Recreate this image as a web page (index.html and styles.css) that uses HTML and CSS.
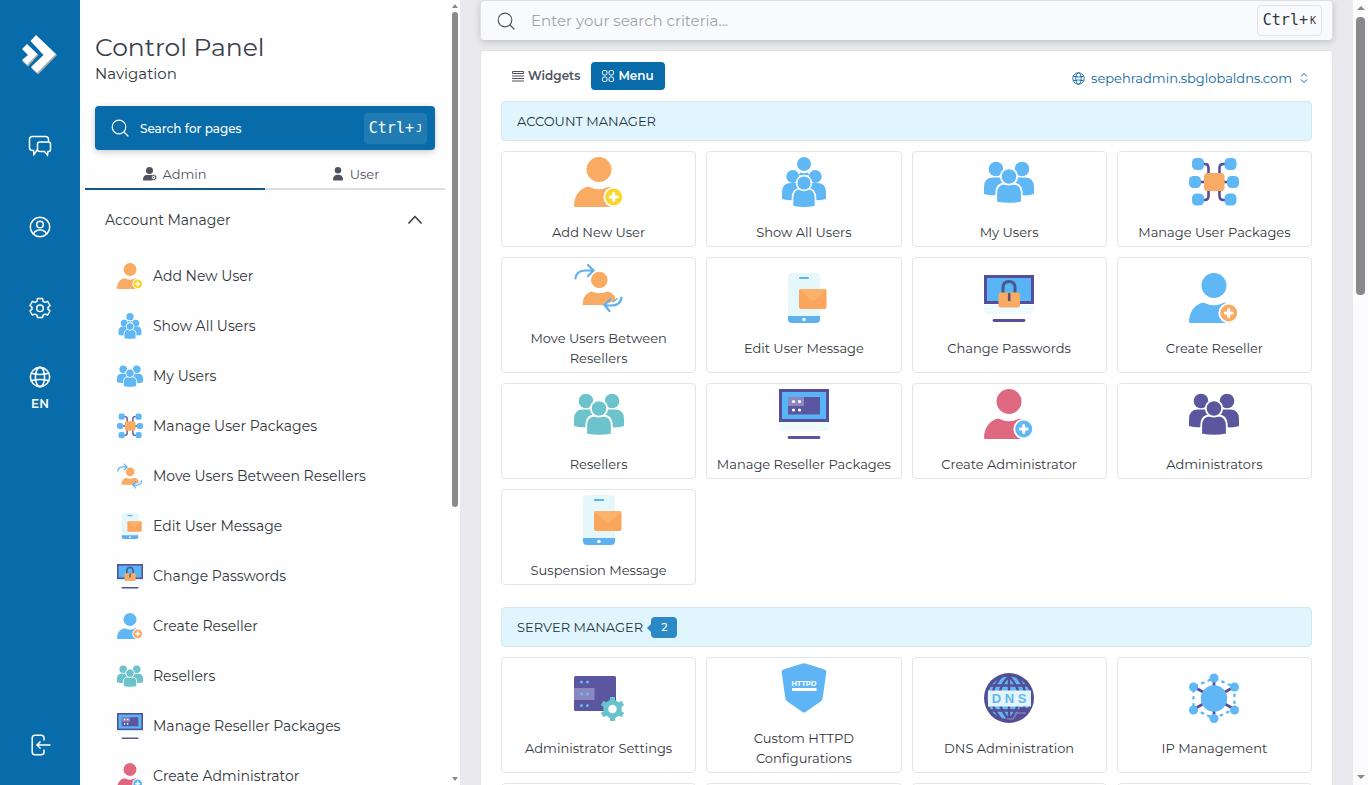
FILE: index.html
```html
<!DOCTYPE html>
<html lang="en">
<head>
    <meta charset="UTF-8">
    <meta name="viewport" content="width=device-width, initial-scale=1.0">
    <title>Control Panel</title>
    <link rel="stylesheet" href="styles.css">
</head>
<body>
    <!-- Shared icons -->
    <svg class="sprite" aria-hidden="true">
        <symbol id="user-plus" viewBox="0 0 50 50">
            <circle cx="25" cy="12.5" r="12.5" fill="currentColor"/>
            <path d="M1.5 50Q0 50 0 48.5C.5 38 6 31 14.5 29.5Q25 35 35.5 29.5L41 32V50Z" fill="currentColor"/>
            <circle cx="39.7" cy="40" r="10.3" fill="#fff"/>
            <circle class="plus" cx="39.7" cy="40" r="8.5"/>
            <path d="M39.7 36.500v7M36.200 40h7" stroke="#fff" stroke-width="3" stroke-linecap="round"/>
        </symbol>
        <symbol id="all-users" viewBox="0 0 50 50">
            <g fill="currentColor">
                <circle cx="25" cy="7" r="7"/>
                <path d="M21 15.5q4 1.500 8 0l1 3H20z"/>
                <circle cx="13.8" cy="19.5" r="6.5"/>
                <circle cx="36.2" cy="19.5" r="6.5"/>
                <path d="M3 42V35q0-9 9-9h26q9 0 9 9v7q-5 1.500-10 1H13q-5 .5-10-1z"/>
            </g>
            <g fill="currentColor" stroke="#fff" stroke-width="1.6">
                <path d="M13.500 49.500V41q0-9.500 8.500-9.500h6q8.500 0 8.500 9.500v8.500q-11.500 2.500-23 0z"/>
                <circle cx="25" cy="26" r="7.4"/>
            </g>
        </symbol>
        <symbol id="group" viewBox="0 0 50 50">
            <g fill="currentColor">
                <circle cx="12" cy="12" r="7.3"/>
                <circle cx="38" cy="12" r="7.3"/>
                <path d="M0 37V30q0-9.500 9-9.500h32q9 0 9 9.500v7q-5 1.800-11 1.300H11Q5 38.500 0 37z"/>
            </g>
            <path d="M16 20.500q2-3 1-6h16q-1 3 1 6z" fill="#fff"/>
            <g fill="currentColor" stroke="#fff" stroke-width="1.8">
                <path d="M12.200 45.500V37q0-10.500 9-10.500h7.600q9 0 9 10.500v8.500q-12.800 2.500-25.600 0z"/>
                <circle cx="25" cy="19.5" r="8.2"/>
            </g>
        </symbol>
        <symbol id="packages" viewBox="0 0 50 50">
            <path d="M14 7h1.500q4 0 4 4v28q0 4-4 4H14M36 7h-1.500q-4 0-4 4v28q0 4 4 4H36M10 25h30" fill="none" stroke="#564f97" stroke-width="2.6"/>
            <g fill="#5fb7f6">
                <rect x="3" y="1" width="12" height="12" rx="4.5"/>
                <rect x="0" y="19" width="12" height="12" rx="4.5"/>
                <rect x="3" y="36.5" width="12" height="12" rx="4.5"/>
                <rect x="35.5" y="1" width="12" height="12" rx="4.5"/>
                <rect x="38" y="19" width="12" height="12" rx="4.5"/>
                <rect x="35.5" y="36.5" width="12" height="12" rx="4.5"/>
            </g>
            <rect x="15" y="16" width="20.5" height="18" rx="3.5" fill="#f9aa63"/>
        </symbol>
        <symbol id="move-users" viewBox="0 0 50 50">
            <g fill="#f9aa63">
                <circle cx="25.3" cy="17" r="8.3"/>
                <path d="M8.500 42q0-10 8.500-13.500 8 3.500 16.500 0Q41 30 41.500 37L31 42z"/>
            </g>
            <path d="M49 35q-2 8-16 8" fill="none" stroke="#fff" stroke-width="5"/>
            <g fill="none" stroke="#5fb0ee" stroke-width="2.2" stroke-linecap="round">
                <path d="M1.500 15.500Q2 8 11 7.500h8M14 2l5.500 5.500L14 13"/>
                <path d="M47.500 34.500q-1 8-10 8h-7M36 36.500l-5.500 5.500 5 6"/>
                <path d="M39 38.500q3-1 4-3" stroke-width="1.4"/>
            </g>
        </symbol>
        <symbol id="message" viewBox="0 0 50 50">
            <rect x="9" y="0" width="32" height="50" rx="4" fill="#e6f7fb"/>
            <path d="M9 43h32v3q0 4-4 4H13q-4 0-4-4z" fill="#5fb0ee"/>
            <circle cx="25" cy="46.5" r="1.7" fill="#fff"/>
            <path d="M21 5h8" stroke="#5fb0ee" stroke-width="2.2" stroke-linecap="round"/>
            <rect x="20" y="16" width="27.5" height="20" rx="2" fill="#f9a65c"/>
            <path d="M20.500 17L34 28.500 47 17q-.5-1-2-1H22q-1 0-1.500 1z" fill="#fbb26d"/>
        </symbol>
        <symbol id="password" viewBox="0 0 50 50">
            <path d="M0 32h50v4q0 5-5 5H5q-5 0-5-5z" fill="#effafd"/>
            <rect x="1.5" y="3.5" width="47" height="26" fill="#58b4f4" stroke="#564f97" stroke-width="3"/>
            <path d="M10 47.500h30" stroke="#564f97" stroke-width="2.8" stroke-linecap="round"/>
            <path d="M19 21v-6q0-6.500 6-6.500t6 6.500v6" fill="none" stroke="#48598d" stroke-width="3"/>
            <rect x="14.5" y="19.5" width="21.5" height="15" rx="2" fill="#f9aa63"/>
            <path d="M25.200 21v6" stroke="#5a5173" stroke-width="2.6" stroke-linecap="round"/>
        </symbol>
        <symbol id="reseller-packages" viewBox="0 0 50 50">
            <path d="M0 33h50v5q0 4-5 4H5q-5 0-5-4z" fill="#effafd"/>
            <rect x="1.5" y="1.5" width="47" height="30" fill="#58b4f4" stroke="#564f97" stroke-width="3"/>
            <rect x="9" y="8" width="32" height="17.5" fill="#5a569f"/>
            <rect x="9" y="8" width="16" height="9" fill="#8b88c0"/>
            <g fill="#fff">
                <circle cx="14.5" cy="12.5" r="1.6"/>
                <circle cx="20.5" cy="12.5" r="1.6"/>
                <circle cx="14.5" cy="21" r="1.6"/>
                <circle cx="20.5" cy="21" r="1.6"/>
            </g>
            <path d="M10 48.500h30" stroke="#5a569f" stroke-width="2.8" stroke-linecap="round"/>
        </symbol>
        <symbol id="server" viewBox="0 0 50 50">
            <rect x="0" y="3" width="42" height="35" rx="1.5" fill="#5a569f"/>
            <rect x="0" y="15" width="20.5" height="12" fill="#8b88c0"/>
            <g fill="#62c0ec">
                <circle cx="7.5" cy="9" r="1.5"/>
                <circle cx="13.5" cy="9" r="1.5"/>
                <circle cx="7.5" cy="21" r="1.5"/>
                <circle cx="13.5" cy="21" r="1.5"/>
                <circle cx="7.5" cy="32.5" r="1.5"/>
                <circle cx="13.5" cy="32.5" r="1.5"/>
            </g>
            <g stroke="#68c3cb" stroke-width="5">
                <path d="M38.500 24v24M28.100 30l20.800 12M28.100 42l20.800-12"/>
                <circle cx="38.5" cy="36" r="6.8" fill="#fff"/>
            </g>
        </symbol>
        <symbol id="httpd" viewBox="0 0 50 50">
            <path d="M23.500.5q1.500-.7 3 0L45.500 6.500q2 .8 1.900 2.500L43.500 36q-.3 1.500-1.500 2.300L26.500 49q-1.500 1-3 0L8 38.300Q6.800 37.500 6.500 36L2.600 9q-.1-1.700 1.900-2.500z" fill="#5fb4f6"/>
            <text x="25" y="22.5" class="httpd-text">HTTPD</text>
            <path d="M13 26.500h24.500" stroke="#fff" stroke-width="3"/>
        </symbol>
        <symbol id="dns" viewBox="0 0 50 50">
            <circle cx="25" cy="25" r="25" fill="#544e96"/>
            <circle cx="25" cy="25" r="21.5" fill="#62b8f2"/>
            <path d="M25 3v44M25 3Q5 24 25 47M25 3q20 21 0 44M17 4Q-1 25 17 46M33 4q18 21 0 42M7 12.500h36M7 37.500h36" fill="none" stroke="#544e96" stroke-width="2.4"/>
            <path d="M36 34q-3 11-18 12 18 6 27-11z" fill="#544e96"/>
            <path d="M23 46h6l4-6h9" fill="none" stroke="#837bb4" stroke-width="1.6"/>
            <rect x="4" y="17.5" width="43" height="16" fill="#e3f4fb"/>
            <text x="25" y="30" class="dns-text">D N S</text>
        </symbol>
        <symbol id="network" viewBox="0 0 50 50">
            <path d="M25 5v40M5 14l40 22M5 36l40-22" stroke="#564f97" stroke-width="2.8"/>
            <path d="M25 5l20.500 9v22L25 45.500 4.500 36V14z" fill="none" stroke="#5fb7f6" stroke-width="2.4" stroke-dasharray="1.5 5.500" stroke-dashoffset="-2" stroke-linecap="round"/>
            <g fill="#5fb7f6">
                <circle cx="25" cy="25.5" r="13.2"/>
                <circle cx="25" cy="5" r="4.5"/>
                <circle cx="45.5" cy="14" r="4.5"/>
                <circle cx="45.5" cy="37" r="4.5"/>
                <circle cx="25" cy="45.5" r="4.5"/>
                <circle cx="4.5" cy="37" r="4.5"/>
                <circle cx="4.5" cy="14" r="4.5"/>
            </g>
        </symbol>
        <symbol id="globe" viewBox="0 0 24 24">
            <g fill="none" stroke="currentColor" stroke-width="1.7">
                <circle cx="12" cy="12" r="10.5"/>
                <ellipse cx="12" cy="12" rx="5" ry="10.5"/>
                <path d="M2.500 8q9.500 2.500 19 0M2.500 16q9.500-2.500 19 0"/>
            </g>
        </symbol>
        <symbol id="search" viewBox="0 0 18 18">
            <g fill="none" stroke="currentColor" stroke-width="1.2" stroke-linecap="round">
                <circle cx="8" cy="8" r="6.8"/>
                <path d="M13 13l4 4"/>
            </g>
        </symbol>
    </svg>

    <div class="layout">
        <!-- Icon rail -->
        <nav class="rail" aria-label="Tools">
            <a class="logo" href="#" aria-label="Home">
                <svg width="36" height="40" viewBox="0 0 36 40">
                    <path d="M34 19L15 38 9 32 10 34 16 39.500 35 20zM15.500 19L5 30 0 25 1 27 6 31.500 16.500 20z" fill="#b5b1aa"/>
                    <path d="M14 0L34 19 15 38 9 32 21.500 20 8.500 6zM5 9L15.500 19 5 30 0 25 6 20 0 14z" fill="#fff"/>
                </svg>
            </a>
            <button class="rail-btn" aria-label="Messages">
                <svg width="24" height="22" viewBox="0 0 24 22">
                    <path d="M9.500 14.500L6 19.500 5.500 15.500H4.500Q1.500 15.500 1.500 12.500V4.500Q1.500 1.500 4.500 1.500H17.500Q20.500 1.500 20.500 4.500V7"/>
                    <path d="M12 7H20Q22.500 7 22.500 9V14.500Q22.500 16.500 20.500 16.500H20L19.500 20 16.500 16.500H12Q9.500 16.500 9.500 14.500V9Q9.500 7 12 7z"/>
                </svg>
            </button>
            <button class="rail-btn" aria-label="Profile">
                <svg width="22" height="22" viewBox="0 0 22 22">
                    <circle cx="11" cy="11" r="9.7"/>
                    <circle cx="11" cy="8.5" r="3.3"/>
                    <path d="M4.500 18Q6 14 11 14t6.500 4"/>
                </svg>
            </button>
            <button class="rail-btn" aria-label="Settings">
                <svg width="22" height="22" viewBox="0 0 22 22">
                    <path d="M8.500 1.500h5l.6 2.800 1.900 1.100 2.700-.9 2.300 4-2 1.900v1.700l2 1.900-2.300 4-2.700-.9-1.900 1.100-.6 2.300h-5l-.6-2.300L6 17.100l-2.700.9-2.300-4 2-1.900v-1.700L1 8.500l2.300-4 2.700.9 1.900-1.100z" stroke-linejoin="round"/>
                    <circle cx="11" cy="11.2" r="3.3"/>
                </svg>
            </button>
            <button class="rail-lang" aria-label="Language: EN">
                <svg width="22" height="22"><use href="#globe"/></svg>
                <span>EN</span>
            </button>
            <button class="rail-btn rail-exit" aria-label="Log out">
                <svg width="22" height="22" viewBox="0 0 22 22">
                    <path d="M15 6.500V4Q15 1.200 12 1.200H6Q3.200 1.200 3.200 4V18Q3.200 20.800 6 20.800h6Q15 20.800 15 18V15.500M21.500 11H8.500M11.500 7.500L8 11l3.500 3.500"/>
                </svg>
            </button>
        </nav>

        <!-- Navigation panel -->
        <aside class="panel">
            <div class="panel-body">
                <div class="panel-head">
                    <h1>Control Panel</h1>
                    <p>Navigation</p>
                    <button class="page-search">
                        <svg width="18" height="18"><use href="#search"/></svg>
                        <span>Search for pages</span>
                        <kbd>Ctrl+<small>J</small></kbd>
                    </button>
                </div>
                <div class="tabs">
                    <button class="tab active">
                        <svg width="14" height="14" viewBox="0 0 14 14" fill="currentColor">
                            <circle cx="6.5" cy="3.5" r="3.5"/>
                            <path d="M0 13Q0 8 4 8h5v5.500H1q-1 0-1-.5z"/>
                            <circle cx="10.5" cy="10.5" r="2.2" fill="#fff" stroke="currentColor" stroke-width="1.5" stroke-dasharray="1.4 .4"/>
                            <circle cx="10.5" cy="10.5" r=".6"/>
                        </svg>
                        Admin
                    </button>
                    <button class="tab">
                        <svg width="14" height="14" viewBox="0 0 14 14" fill="currentColor">
                            <circle cx="7" cy="3.3" r="3.2"/>
                            <path d="M2 12.500Q2 7.800 7 7.800t5 4.700q0 1-1 1H3q-1 0-1-1z"/>
                        </svg>
                        User
                    </button>
                </div>
                <button class="group-toggle">
                    Account Manager
                    <svg width="16" height="10" viewBox="0 0 16 10"><path d="M1.500 8.500L8 1.500l6.500 7" fill="none" stroke="currentColor" stroke-width="1.5"/></svg>
                </button>
                <ul class="nav-list">
                    <li><a href="#"><svg class="orange"><use href="#user-plus"/></svg>Add New User</a></li>
                    <li><a href="#"><svg class="blue"><use href="#all-users"/></svg>Show All Users</a></li>
                    <li><a href="#"><svg class="blue"><use href="#group"/></svg>My Users</a></li>
                    <li><a href="#"><svg><use href="#packages"/></svg>Manage User Packages</a></li>
                    <li><a href="#"><svg><use href="#move-users"/></svg>Move Users Between Resellers</a></li>
                    <li><a href="#"><svg><use href="#message"/></svg>Edit User Message</a></li>
                    <li><a href="#"><svg><use href="#password"/></svg>Change Passwords</a></li>
                    <li><a href="#"><svg class="blue"><use href="#user-plus"/></svg>Create Reseller</a></li>
                    <li><a href="#"><svg class="teal"><use href="#group"/></svg>Resellers</a></li>
                    <li><a href="#"><svg><use href="#reseller-packages"/></svg>Manage Reseller Packages</a></li>
                    <li><a href="#"><svg class="pink"><use href="#user-plus"/></svg>Create Administrator</a></li>
                </ul>
            </div>
            <div class="scrollbar" aria-hidden="true">
                <span class="arrow up"></span>
                <div class="track"><div class="thumb"></div></div>
                <span class="arrow down"></span>
            </div>
        </aside>

        <!-- Main content -->
        <main class="main">
            <div class="search-bar">
                <label for="criteria" aria-label="Search"><svg width="18" height="18"><use href="#search"/></svg></label>
                <input type="text" id="criteria" placeholder="Enter your search criteria...">
                <kbd>Ctrl+<small>K</small></kbd>
            </div>

            <div class="content">
                <div class="toolbar">
                    <div class="views">
                        <button class="view">
                            <svg width="12" height="12" viewBox="0 0 12 12" fill="none" stroke="currentColor"><path d="M.5 1.500h11v2H.5zM0 6h12M0 8.500h12M0 11h12"/></svg>
                            Widgets
                        </button>
                        <button class="view active">
                            <svg width="12" height="12" viewBox="0 0 12 12" fill="none" stroke="currentColor">
                                <rect x=".5" y=".5" width="4.5" height="4.5" rx="1.5"/>
                                <rect x="7" y=".5" width="4.5" height="4.5" rx="1.5"/>
                                <rect x=".5" y="7" width="4.5" height="4.5" rx="1.5"/>
                                <rect x="7" y="7" width="4.5" height="4.5" rx="1.5"/>
                            </svg>
                            Menu
                        </button>
                    </div>
                    <a class="domain" href="#">
                        <svg width="13" height="13"><use href="#globe"/></svg>
                        sepehradmin.sbglobaldns.com
                        <svg class="sort" width="8" height="10" viewBox="0 0 8 10" fill="none" stroke="currentColor"><path d="M1 3.500l3-3 3 3M1 6.500l3 3 3-3"/></svg>
                    </a>
                </div>

                <section>
                    <h2>Account Manager</h2>
                    <div class="cards">
                        <a class="card" href="#"><svg class="orange"><use href="#user-plus"/></svg>Add New User</a>
                        <a class="card" href="#"><svg class="blue"><use href="#all-users"/></svg>Show All Users</a>
                        <a class="card" href="#"><svg class="blue"><use href="#group"/></svg>My Users</a>
                        <a class="card" href="#"><svg><use href="#packages"/></svg>Manage User Packages</a>
                        <a class="card" href="#"><svg><use href="#move-users"/></svg>Move Users Between Resellers</a>
                        <a class="card" href="#"><svg><use href="#message"/></svg>Edit User Message</a>
                        <a class="card" href="#"><svg><use href="#password"/></svg>Change Passwords</a>
                        <a class="card" href="#"><svg class="blue"><use href="#user-plus"/></svg>Create Reseller</a>
                        <a class="card" href="#"><svg class="teal"><use href="#group"/></svg>Resellers</a>
                        <a class="card" href="#"><svg><use href="#reseller-packages"/></svg>Manage Reseller Packages</a>
                        <a class="card" href="#"><svg class="pink"><use href="#user-plus"/></svg>Create Administrator</a>
                        <a class="card" href="#"><svg class="purple"><use href="#group"/></svg>Administrators</a>
                        <a class="card" href="#"><svg><use href="#message"/></svg>Suspension Message</a>
                    </div>
                </section>

                <section>
                    <h2>Server Manager <span class="badge">2</span></h2>
                    <div class="cards">
                        <a class="card" href="#"><svg><use href="#server"/></svg>Administrator Settings</a>
                        <a class="card" href="#"><svg><use href="#httpd"/></svg>Custom HTTPD Configurations</a>
                        <a class="card" href="#"><svg><use href="#dns"/></svg>DNS Administration</a>
                        <a class="card" href="#"><svg><use href="#network"/></svg>IP Management</a>
                        <div class="card"></div>
                        <div class="card"></div>
                        <div class="card"></div>
                        <div class="card"></div>
                    </div>
                </section>
            </div>
        </main>
        <div class="scrollbar page-scroll" aria-hidden="true">
            <span class="arrow up"></span>
            <div class="track"><div class="thumb"></div></div>
            <span class="arrow down"></span>
        </div>
    </div>
</body>
</html>
```
FILE: styles.css
```css
* {
    box-sizing: border-box;
}
body {
    margin: 0;
    font-family: Montserrat, Inter, sans-serif;
    font-size: 13px;
    color: #33363d;
    background-color: #e9e9ed;
}
button {
    border: none;
    background: none;
    padding: 0;
    font: inherit;
    color: inherit;
    cursor: pointer;
}
a {
    color: inherit;
    text-decoration: none;
}
svg {
    flex-shrink: 0;
}
.sprite {
    display: none;
}
.layout {
    display: flex;
    height: 100vh;
    overflow: hidden;
}

/* icon rail */
.rail {
    width: 80px;
    flex-shrink: 0;
    display: flex;
    flex-direction: column;
    background-color: #086cab;
    color: white;
}
.logo {
    display: flex;
    align-items: center;
    justify-content: center;
    height: 105px;
    padding-top: 4px;
}
.rail-btn {
    display: flex;
    align-items: center;
    justify-content: center;
    height: 81px;
}
.rail-btn svg {
    fill: none;
    stroke: white;
    stroke-width: 1.5;
}
.rail-lang {
    display: flex;
    flex-direction: column;
    align-items: center;
    gap: 6px;
    padding-top: 18px;
    font-size: 12px;
    line-height: 20px;
    font-weight: 600;
}
.rail-exit {
    margin-top: auto;
}

/* navigation panel */
.panel {
    width: 380px;
    flex-shrink: 0;
    display: flex;
    background-color: #fefefe;
}
.panel-body {
    flex: 1;
    padding: 31px 5px 0;
    overflow: hidden;
}
.panel-head {
    padding: 0 10px;
}
.panel h1 {
    margin: 0;
    font-size: 25px;
    line-height: 32px;
    font-weight: 400;
    color: #3a3f4c;
}
.panel p {
    margin: 0 0 21px;
    font-size: 15px;
    line-height: 22px;
}
.page-search {
    display: flex;
    align-items: center;
    gap: 11px;
    width: 100%;
    height: 44px;
    padding: 0 8px 0 16px;
    border-radius: 4px;
    background-color: #086cab;
    color: white;
    font-size: 12px;
    font-weight: 500;
    box-shadow: 0 2px 6px rgba(0, 0, 0, 0.2);
}
kbd {
    margin-left: auto;
    padding: 0 5px;
    border-radius: 4px;
    font-family: "DejaVu Sans Mono", monospace;
    font-size: 15px;
    font-weight: 400;
    line-height: 30px;
    white-space: nowrap;
}
kbd small {
    font-size: 10px;
    margin-left: 2px;
    vertical-align: 1px;
}
.page-search kbd {
    background-color: rgba(255, 255, 255, 0.1);
}
.tabs {
    display: flex;
}
.tab {
    flex: 1;
    display: flex;
    align-items: center;
    justify-content: center;
    gap: 5px;
    padding-top: 10px;
    line-height: 28px;
    border-bottom: 2px solid #dcdde1;
    color: #50535e;
}
.tab.active {
    border-color: #11588a;
}
.group-toggle {
    display: flex;
    align-items: center;
    justify-content: space-between;
    width: 100%;
    height: 60px;
    padding: 0 22px 0 20px;
    font-size: 14px;
}
.nav-list {
    margin: 0;
    padding: 1px 0 0;
    list-style: none;
}
.nav-list a {
    display: flex;
    align-items: center;
    gap: 10px;
    height: 50px;
    padding-left: 32px;
    font-size: 14px;
}
.nav-list svg {
    width: 26px;
    height: 26px;
}

/* icon colours */
.orange {
    color: #f9aa63;
    --plus: #fad62c;
}
.blue {
    color: #5fb7f6;
    --plus: #f9aa63;
}
.teal {
    color: #6cc3cc;
}
.pink {
    color: #df6881;
    --plus: #5fb7f6;
}
.purple {
    color: #5b579f;
}
.plus {
    fill: var(--plus);
}
.httpd-text,
.dns-text {
    font-weight: 700;
    text-anchor: middle;
}
.httpd-text {
    font-size: 7px;
    fill: white;
}
.dns-text {
    font-family: "Liberation Sans", sans-serif;
    font-size: 13px;
    fill: #5fb7f6;
}

/* scrollbars */
.scrollbar {
    width: 10px;
    flex-shrink: 0;
    display: flex;
    flex-direction: column;
    align-items: center;
    padding: 4px 0;
}
.arrow {
    border: 3px solid transparent;
}
.arrow.up {
    border-top: none;
    border-bottom: 4px solid #8a8a8a;
}
.arrow.down {
    border-bottom: none;
    border-top: 4px solid #8a8a8a;
}
.track {
    flex: 1;
    width: 6px;
    margin: 4px 0;
}
.thumb {
    height: 65%;
    border-radius: 4px;
    background-color: #8a8a8a;
}
.page-scroll {
    width: 15px;
    padding: 6px 0;
    background-color: #fbfbfd;
}
.page-scroll .arrow {
    border-width: 4px;
}
.page-scroll .up {
    border-top: none;
}
.page-scroll .down {
    border-bottom: none;
}
.page-scroll .track {
    width: 9px;
    margin: 7px 0;
}
.page-scroll .thumb {
    height: 37%;
}

/* main content */
.main {
    flex: 1;
    min-width: 0;
    padding: 0 20px;
    overflow: hidden;
}
.search-bar {
    display: flex;
    align-items: center;
    height: 40px;
    padding: 0 10px 0 16px;
    border: 1px solid #dfe0e5;
    border-bottom: none;
    border-radius: 4px;
    background-color: #f9fafd;
    box-shadow: 0 2px 6px rgba(0, 0, 0, 0.16);
}
.search-bar label {
    display: flex;
    color: #55585f;
}
.search-bar input {
    flex: 1;
    min-width: 0;
    border: none;
    padding: 0 16px;
    background: none;
    font: inherit;
    font-size: 15px;
    outline: none;
}
.search-bar input::placeholder {
    color: #a2a4aa;
}
.search-bar kbd {
    border: 1px solid #e3e4e8;
    line-height: 28px;
}
.content {
    margin-top: 10px;
    padding: 11px 20px;
    border: 1px solid #e2e2e7;
    border-radius: 4px;
    background-color: white;
}
.toolbar {
    display: flex;
    justify-content: space-between;
    align-items: flex-end;
    margin-bottom: 11px;
}
.views {
    display: flex;
}
.view {
    display: flex;
    align-items: center;
    gap: 4px;
    padding: 0 11px;
    border-radius: 4px;
    font-size: 12px;
    line-height: 28px;
    font-weight: 600;
    color: #50535e;
}
.view.active {
    background-color: #086cab;
    color: white;
}
.domain {
    display: flex;
    align-items: center;
    gap: 6px;
    padding-right: 4px;
    line-height: 24px;
    color: #0b67a0;
}
.sort {
    margin-left: 2px;
}
.content h2 {
    display: flex;
    align-items: center;
    height: 40px;
    margin: 0 0 10px;
    padding: 0 15px;
    border: 1px solid #d5e6ee;
    border-radius: 4px;
    background-color: #e1f5fe;
    color: #1d3442;
    font-size: 13px;
    font-weight: 400;
    text-transform: uppercase;
}
.badge {
    position: relative;
    margin-left: 8px;
    padding: 0 10px;
    border-radius: 4px;
    background-color: #2b8ac5;
    color: white;
    font-size: 11px;
    font-weight: 500;
    line-height: 21px;
}
.badge::before {
    content: "";
    position: absolute;
    left: -4px;
    top: 7px;
    border: 4px solid transparent;
    border-left: none;
    border-right-color: #2b8ac5;
}
.cards {
    display: grid;
    grid-template-columns: repeat(4, 1fr);
    gap: 10px;
    margin-bottom: 22px;
}
.card {
    display: flex;
    flex-direction: column;
    align-items: center;
    justify-content: center;
    gap: 15px;
    min-height: 96px;
    padding: 5px 8px 4px;
    border: 1px solid #e3e4e6;
    border-radius: 4px;
    line-height: 20px;
    text-align: center;
}
.card svg {
    width: 50px;
    height: 50px;
}
```
